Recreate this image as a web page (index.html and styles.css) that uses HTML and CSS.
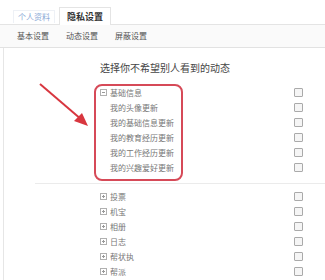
FILE: index.html
```html
<!DOCTYPE html>
<html lang="zh">
<head>
    <meta charset="UTF-8">
    <meta name="viewport" content="width=device-width, initial-scale=1.0">
    <title>隐私设置</title>
    <link rel="stylesheet" href="styles.css">
</head>
<body>
    <div class="tabs">
        <span class="tab">个人资料</span>
        <span class="tab active">隐私设置</span>
    </div>
    <div class="subnav">
        <span>基本设置</span>
        <span>动态设置</span>
        <span>屏蔽设置</span>
    </div>

    <div class="main">
        <div class="title">选择你不希望别人看到的动态</div>

        <div class="group">
            <div class="row"><span class="toggle open"></span>基础信息<span class="check"></span></div>
            <div class="row sub">我的头像更新<span class="check"></span></div>
            <div class="row sub">我的基础信息更新<span class="check"></span></div>
            <div class="row sub">我的教育经历更新<span class="check"></span></div>
            <div class="row sub">我的工作经历更新<span class="check"></span></div>
            <div class="row sub">我的兴趣爱好更新<span class="check"></span></div>
        </div>

        <div class="group">
            <div class="row"><span class="toggle"></span>投票<span class="check"></span></div>
            <div class="row"><span class="toggle"></span>机宝<span class="check"></span></div>
            <div class="row"><span class="toggle"></span>相册<span class="check"></span></div>
            <div class="row"><span class="toggle"></span>日志<span class="check"></span></div>
            <div class="row"><span class="toggle"></span>帮状执<span class="check"></span></div>
            <div class="row"><span class="toggle"></span>帮派<span class="check"></span></div>
        </div>
    </div>

    <!-- annotation drawn over the page -->
    <div class="highlight"></div>
    <svg class="arrow" width="100" height="60" viewBox="0 0 100 60">
        <line x1="2" y1="2" x2="44" y2="38" stroke="#d8363f" stroke-width="2"/>
        <polygon points="50,44 36,39 44,31" fill="#d8363f"/>
    </svg>
</body>
</html>
```

FILE: styles.css
```css
body {
    margin: 0;
    width: 325px;
    height: 280px;
    overflow: hidden;
    background: #fff;
    position: relative;
    font-family: "Noto Sans CJK SC", "Noto Sans", sans-serif;
    font-size: 8px;
    color: #555;
}
.tabs {
    display: flex;
    align-items: flex-end;
    gap: 4px;
    height: 25px;
    padding-left: 13px;
    border-bottom: 1px solid #e4e4e4;
    box-sizing: border-box;
}
.tab {
    height: 12px;
    line-height: 12px;
    padding: 0 4px;
    margin-bottom: 1px;
    border: 1px solid #eef1f6;
    border-bottom: none;
    color: #8aa8d6;
}
.tab.active {
    height: 17px;
    line-height: 17px;
    padding: 0 7px;
    margin-bottom: -1px;
    border-color: #e4e4e4;
    background: #fff;
    color: #333;
    font-weight: bold;
    font-size: 9px;
}
.subnav {
    display: flex;
    gap: 17px;
    height: 22px;
    line-height: 22px;
    padding-left: 17px;
    background: #fafafa;
    border-bottom: 1px solid #e2e2e2;
    color: #555;
}
.main {
    margin-left: 3px;
    border-left: 1px solid #e6e6e6;
    height: 240px;
}
.title {
    padding: 13px 0 0 96px;
    height: 14px;
    line-height: 14px;
    font-size: 10px;
    color: #444;
}
.group {
    margin-left: 31px;
    padding: 10px 0 8px;
}
.group + .group {
    border-top: 1px solid #ebebeb;
    padding-top: 5px;
}
.row {
    display: flex;
    align-items: center;
    height: 15px;
    padding: 0 22px 0 65px;
    color: #777;
}
.row.sub {
    padding-left: 75px;
}
.toggle {
    position: relative;
    width: 5px;
    height: 5px;
    margin-right: 3px;
    border: 1px solid #b0b0b0;
}
.toggle::before {
    content: "";
    position: absolute;
    left: 1px;
    top: 2px;
    width: 3px;
    height: 1px;
    background: #999;
}
.toggle::after {
    content: "";
    position: absolute;
    left: 2px;
    top: 1px;
    width: 1px;
    height: 3px;
    background: #999;
}
.toggle.open::after {
    display: none;
}
.check {
    margin-left: auto;
    width: 7px;
    height: 7px;
    border: 1px solid #aaa;
    border-radius: 1px;
    background: #f5f5f5;
}
.highlight {
    position: absolute;
    left: 94px;
    top: 84px;
    width: 85px;
    height: 93px;
    border: 2px solid #d64a58;
    border-radius: 8px;
}
.arrow {
    position: absolute;
    left: 38px;
    top: 82px;
}
```
